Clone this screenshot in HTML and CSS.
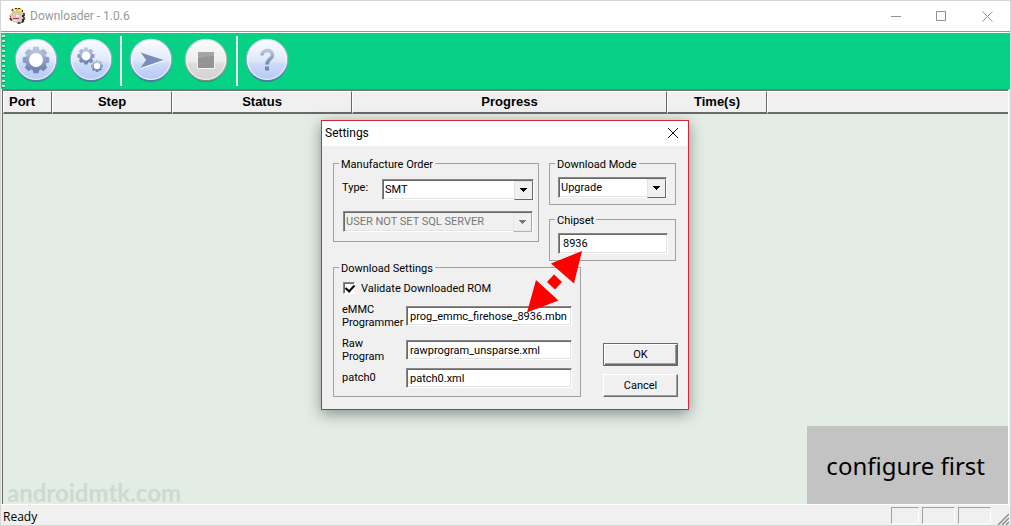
FILE: index.html
```html
<!DOCTYPE html>
<html lang="en">
<head>
<meta charset="utf-8">
<meta name="viewport" content="width=device-width, initial-scale=1">
<title>Downloader - 1.0.6</title>
<link rel="stylesheet" href="styles.css">
</head>
<body>
<svg class="defs" width="0" height="0" aria-hidden="true">
  <defs>
    <linearGradient id="blue" x1="0" y1="0" x2="0" y2="1">
      <stop offset="0" stop-color="#fdfeff"/><stop offset=".52" stop-color="#dfe7f8"/>
      <stop offset=".6" stop-color="#cddaf7"/><stop offset="1" stop-color="#b4c8f5"/>
    </linearGradient>
    <linearGradient id="grey" x1="0" y1="0" x2="0" y2="1">
      <stop offset="0" stop-color="#fdfdfd"/><stop offset=".52" stop-color="#ececec"/>
      <stop offset=".6" stop-color="#dcdcdc"/><stop offset="1" stop-color="#d2d2d2"/>
    </linearGradient>
    <linearGradient id="ink" x1="0" y1="0" x2="0" y2="1">
      <stop offset="0" stop-color="#b9c5df"/><stop offset="1" stop-color="#7285b3"/>
    </linearGradient>
    <linearGradient id="rim" x1="0" y1="0" x2="0" y2="1">
      <stop offset="0" stop-color="#d5dff2"/><stop offset="1" stop-color="#5577a8"/>
    </linearGradient>
    <linearGradient id="rim-grey" x1="0" y1="0" x2="0" y2="1">
      <stop offset="0" stop-color="#dedede"/><stop offset="1" stop-color="#868c88"/>
    </linearGradient>
    <g id="gear">
      <circle r="8.800" fill="#fff"/>
      <circle r="8.800" fill="none" stroke="url(#ink)" stroke-width="3.800"/>
      <g fill="#8b9bc4">
        <path d="M-3.500-9.500-2.600-13.300H2.600L3.500-9.500z" fill="#b7c3de"/>
        <path d="M-3.500-9.500-2.600-13.300H2.600L3.500-9.500z" transform="rotate(45)" fill="#a9b6d5"/>
        <path d="M-3.500-9.500-2.600-13.300H2.600L3.500-9.500z" transform="rotate(90)"/>
        <path d="M-3.500-9.500-2.600-13.300H2.600L3.500-9.500z" transform="rotate(135)" fill="#7588b6"/>
        <path d="M-3.500-9.500-2.600-13.300H2.600L3.500-9.500z" transform="rotate(180)" fill="#7285b3"/>
        <path d="M-3.500-9.500-2.600-13.300H2.600L3.500-9.500z" transform="rotate(225)" fill="#7588b6"/>
        <path d="M-3.500-9.500-2.600-13.300H2.600L3.500-9.500z" transform="rotate(270)"/>
        <path d="M-3.500-9.500-2.600-13.300H2.600L3.500-9.500z" transform="rotate(315)" fill="#a9b6d5"/>
      </g>
    </g>
    <g id="disc">
      <circle cx="22" cy="23.500" r="20.500" fill="#066b45" opacity=".45"/>
      <circle cx="22" cy="22" r="20.700" fill="url(#blue)" stroke="url(#rim)" stroke-width="1.200"/>
      <circle cx="22" cy="22" r="19.400" fill="none" stroke="#fff" stroke-opacity=".7"/>
    </g>
  </defs>
</svg>
<div class="window">
  <header class="titlebar">
    <svg class="app-icon" width="17" height="17" viewBox="0 0 17 17" aria-hidden="true">
      <path d="M3 5 4 1 8 0 13 1 15 5 16 9 14 14 9 15 4 14 1 11 0 7z" fill="#c9cdc9"/>
      <path d="M15 5v8l-3 2H8M1 10l2 3M3 3l1-2" fill="none" stroke="#221d16" stroke-width="1.500" stroke-dasharray="3 1"/>
      <path d="M3 5 4 1 7 1 12 0 14 4 11 6 8 4 5 5z" fill="#edc64a"/>
      <path d="M5 2h2v1H5zM10 2h2v1h-2z" fill="#fff2a0"/>
      <path d="M6 0h2v1H6zM9 0h2v1H9zM13 2h1v2h-1z" fill="#3a2b20"/>
      <path d="M4 10h6v1H4zM1 8h1v1H1z" fill="#d92d35"/>
      <path d="M13 7h2v2h-2zM13 11h2v2h-2z" fill="#3a2b20"/>
      <path d="M7 7h3v2H7zM4 12h4v1H4z" fill="#f0f0ee"/>
    </svg>
    <h1 class="title">Downloader - 1.0.6</h1>
    <div class="caption-buttons">
      <button type="button" aria-label="Minimize"><svg width="11" height="11"><path d="M1 5.500h10"/></svg></button>
      <button type="button" aria-label="Maximize"><svg width="11" height="11"><path d="M.5.500h9v9h-9z"/></svg></button>
      <button type="button" aria-label="Close"><svg width="11" height="11"><path d="m.5.500 10 10m0-10-10 10"/></svg></button>
    </div>
  </header>

  <nav class="toolbar" aria-label="Tools">
    <span class="grip"></span>
    <div class="tool-group">
      <button type="button" class="tool" aria-label="Settings">
        <svg width="44" height="46"><use href="#disc"/><use href="#gear" transform="translate(22 22)"/></svg>
      </button>
      <button type="button" class="tool" aria-label="Advanced settings">
        <svg width="44" height="46"><use href="#disc"/><use href="#gear" transform="translate(17 18) scale(.64)"/><use href="#gear" transform="translate(28 28) scale(.45)"/></svg>
      </button>
    </div>
    <div class="tool-group">
      <button type="button" class="tool" aria-label="Start">
        <svg width="44" height="46"><use href="#disc"/><path d="M11.500 15.500 34.500 23 11.500 31l5.500-8z" fill="#fff"/><path d="M11.500 14.500 34.500 22 11.500 30l5.500-8z" fill="#7a8cba"/></svg>
      </button>
      <button type="button" class="tool" aria-label="Stop">
        <svg width="44" height="46"><circle cx="22" cy="23.500" r="20.500" fill="#066b45" opacity=".45"/><circle cx="22" cy="22" r="20.700" fill="url(#grey)" stroke="url(#rim-grey)" stroke-width="1.200"/><circle cx="22" cy="22" r="19.400" fill="none" stroke="#fff" stroke-opacity=".7"/><path d="M13 13h18v18H13z" fill="#f2f2f2"/><path d="M14 14h16v16H14z" fill="#949494"/><path d="M14 14h16v4q-8 0-16 2z" fill="#a5a5a5"/></svg>
      </button>
    </div>
    <div class="tool-group">
      <button type="button" class="tool" aria-label="Help">
        <svg width="44" height="46"><use href="#disc"/><path d="M17 17.500c0-6.500 10.500-6.500 10.500-.5 0 4.500-5.500 4-5.500 9.500" fill="none" stroke="url(#ink)" stroke-width="3.600"/><path d="M20 28.500h4v4h-4z" fill="#7285b3"/></svg>
      </button>
    </div>
  </nav>

  <main class="client">
    <table class="ports">
      <colgroup><col class="c-port"><col class="c-step"><col class="c-status"><col class="c-progress"><col class="c-time"><col></colgroup>
      <thead><tr><th class="first">Port</th><th>Step</th><th>Status</th><th>Progress</th><th>Time(s)</th><td></td></tr></thead>
    </table>
    <div class="client-foot">
      <span class="watermark">androidmtk.com</span>
      <p class="note">configure first</p>
    </div>
  </main>

  <footer class="statusbar">
    <span class="status-text">Ready</span>
    <span class="pane"></span><span class="pane wide"></span><span class="pane wide"></span>
    <svg class="resize" width="12" height="13"><path d="M1 13 12 2M5 13l7-7M9 13l3-3" stroke="#8c8c8c" stroke-width="1.500"/></svg>
  </footer>

  <div class="modal-layer">
    <form class="dialog" role="dialog" aria-labelledby="dialog-title">
      <header class="dialog-bar">
        <h2 id="dialog-title">Settings</h2>
        <button type="button" class="dialog-close" aria-label="Close"><svg width="12" height="12"><path d="m1 1 10 10m0-10L1 11"/></svg></button>
      </header>
      <div class="dialog-body">
        <div class="row">
          <fieldset class="group order">
            <legend>Manufacture Order</legend>
            <div class="type-line">
              <label for="type">Type:</label>
              <div class="combo"><select id="type"><option>SMT</option></select></div>
            </div>
            <div class="combo disabled"><select aria-label="Order" disabled><option>USER NOT SET SQL SERVER</option></select></div>
          </fieldset>
          <div class="side">
            <fieldset class="group mode">
              <legend>Download Mode</legend>
              <div class="combo"><select aria-label="Download Mode"><option>Upgrade</option></select></div>
            </fieldset>
            <fieldset class="group chipset">
              <legend>Chipset</legend>
              <input class="text" type="text" aria-label="Chipset" value="8936">
            </fieldset>
          </div>
        </div>
        <div class="row">
          <fieldset class="group downloads">
            <legend>Download Settings</legend>
            <label class="check"><input type="checkbox" checked>Validate Downloaded ROM</label>
            <div class="field tall"><label for="emmc">eMMC Programmer</label><input class="text" id="emmc" type="text" value="prog_emmc_firehose_8936.mbn"></div>
            <div class="field tall"><label for="raw">Raw Program</label><input class="text" id="raw" type="text" value="rawprogram_unsparse.xml"></div>
            <div class="field"><label for="patch">patch0</label><input class="text" id="patch" type="text" value="patch0.xml"></div>
          </fieldset>
          <div class="actions">
            <button type="submit" class="push default">OK</button>
            <button type="button" class="push">Cancel</button>
          </div>
        </div>
      </div>
      <svg class="arrow" width="56" height="64" viewBox="0 0 56 64" aria-hidden="true">
        <path d="M55 1 24 13.500 47 33.500zM27 24.500l8 7.500-7 7.500-8-7.500zM0 62.500 9 30 31.500 50.500z" fill="#f00"/>
      </svg>
    </form>
  </div>
</div>
</body>
</html>
```

FILE: styles.css
```css
* { box-sizing: border-box; }
body { margin: 0; font-family: "Noto Sans", "Open Sans", sans-serif; font-size: 12px; color: #000; }
h1, h2, p { margin: 0; font-weight: 400; }
button, input, select { font: inherit; color: inherit; margin: 0; border-radius: 0; }
.defs { position: absolute; }

.window {
  position: relative;
  display: flex;
  flex-direction: column;
  min-height: 100vh;
  border: 1px solid #d6d6d6;
  background: #f0f0f0;
}

.titlebar { display: flex; align-items: center; height: 31px; padding-left: 8px; background: #fff; border-bottom: 1px solid #999; }
.app-icon { flex: none; }
.title { margin-left: 4px; font-family: Roboto, sans-serif; font-size: 12px; line-height: 16px; color: #999; }
.caption-buttons { display: flex; margin-left: auto; }
.caption-buttons button { display: grid; place-items: center; width: 46px; height: 30px; padding: 0; border: 0; background: none; }
.caption-buttons svg { fill: none; stroke: #929292; }

.toolbar { display: flex; align-items: center; height: 57px; padding-left: 1px; border-top: 1px solid #fff; background: #07d184; }
.grip { width: 4px; height: 53px; border-right: 1px solid transparent; background: repeating-linear-gradient(#baf3dc 0 2px, #079d65 2px 3px, transparent 3px 5px) padding-box; }
.tool-group { display: flex; gap: 11px; padding: 2px 7px 2px 8px; height: 50px; }
.tool-group + .tool-group { border-left: 2px solid #e8faf3; padding: 2px 8px 2px 7px; }
.tool { padding: 0; border: 0; background: none; height: 46px; }
.tool svg { display: block; }

.client {
  display: flex;
  flex: 1;
  flex-direction: column;
  margin: 0 1px;
  border: 1px solid #696969;
  border-width: 2px 1px 0;
  border-top-color: #777;
  border-right-color: #fff;
  background: #e3ede5;
}
.ports { width: 100%; table-layout: fixed; border-collapse: separate; border-spacing: 0; font: bold 13px/20px "Liberation Sans", Arial, sans-serif; }
.ports th, .ports td { height: 23px; padding: 0; background: #f0f0f0; border: 1px solid #696969; border-width: 1px 1px 2px; border-top-color: #fff; border-left-color: #fff; }
.ports td { border-right: 0; }
.ports .first { padding-left: 5px; text-align: left; }
.c-port { width: 49px; }
.c-step { width: 120px; }
.c-status { width: 180px; }
.c-progress { width: 315px; }
.c-time { width: 100px; }

.client-foot { display: flex; align-items: flex-end; justify-content: space-between; margin-top: auto; }
.watermark { padding-left: 4px; font: bold 24px/22px Lato, sans-serif; color: #ced9d1; }
.note { padding: 23px 23px 22px 19px; background: #c3c3c3; font-size: 24px; line-height: 33px; }

.statusbar { display: flex; align-items: center; height: 21px; border-top: 1px solid #fff; gap: 3px; padding-left: 2px; }
.status-text { margin-right: auto; padding-top: 2px; font-family: "Open Sans", sans-serif; }
.pane { width: 28px; height: 17px; border: 1px solid #a0a0a0; border-right-color: #fff; border-bottom-color: #fff; }
.wide { width: 33px; }
.resize { margin: 0 1px 0 3px; align-self: flex-end; }

.modal-layer { position: absolute; inset: 0; display: grid; place-items: center; padding: 3px 1px 0 0; pointer-events: none; }
.dialog {
  position: relative;
  width: 368px;
  border: 1px solid #e02038;
  background: #f0f0f0;
  box-shadow: 0 4px 14px rgba(0, 0, 0, .4);
  pointer-events: auto;
  font-family: Roboto, sans-serif;
  font-size: 11px;
  line-height: 13px;
}
.dialog-bar { display: flex; align-items: center; justify-content: space-between; height: 25px; padding: 0 9px 0 3px; background: #fff; }
.dialog-bar h2 { font: 12px/16px Roboto, sans-serif; }
.dialog-close { padding: 0; border: 0; background: none; }
.dialog-close svg { display: block; fill: none; stroke: #111; }
.dialog-body { padding: 11px 12px 12px 11px; }
.row { display: flex; gap: 10px; }

.group { min-width: 0; margin: 0; padding: 0 9px; border: 1px solid #a0a0a0; }
.group legend { margin-left: -4px; padding: 0 2px; height: 13px; line-height: 15px; white-space: nowrap; }
.order { width: 206px; height: 85px; padding: 9px 4px 0 8px; }
.order legend { margin-left: -3px; }
.type-line { display: flex; margin: 0 0 11px; }
.type-line label { width: 40px; line-height: 17px; }
.type-line .combo { flex: 1; }
.order .disabled { margin: 0 1px; }
.side { flex: 1; display: grid; gap: 8px; align-content: start; }
.mode, .chipset { height: 48px; padding: 7px 8px 0; }
.chipset { padding-right: 7px; }
.mode legend, .chipset legend { margin-left: -3px; }
.downloads { width: 248px; height: 136px; padding: 8px 8px 0; }
.downloads legend { margin-left: -3px; }

.combo { position: relative; height: 21px; }
.combo select, .text {
  display: block;
  width: 100%;
  height: 21px;
  padding: 1px 2px 0;
  appearance: none;
  border: 1px solid #888;
  border-right-color: #fff;
  border-bottom-color: #fff;
  background: #fff;
  box-shadow: inset 1px 1px #696969, inset -1px -1px #e3e3e3;
  outline: 0;
}
.combo::after {
  content: "";
  position: absolute;
  top: 2px;
  right: 1px;
  width: 17px;
  height: 17px;
  border: 1px solid #e3e3e3;
  border-right-color: #696969;
  border-bottom-color: #696969;
  background: linear-gradient(#000 0 0) 5px 6px / 7px 1px no-repeat, linear-gradient(#000 0 0) 6px 7px / 5px 1px no-repeat, linear-gradient(#000 0 0) 7px 8px / 3px 1px no-repeat, linear-gradient(#000 0 0) 8px 9px / 1px 1px no-repeat, #f0f0f0;
  pointer-events: none;
}
.disabled select { background: #f0f0f0; color: #777; opacity: 1; }
.disabled::after { opacity: .5; }
.chipset .text { padding-left: 4px; }

.check { display: flex; align-items: center; gap: 6px; height: 13px; margin: 0 0 4px 1px; line-height: 15px; }
.check input {
  width: 12px;
  height: 12px;
  appearance: none;
  border: 1px solid #888;
  border-right-color: #fff;
  border-bottom-color: #fff;
  background: #fff;
  box-shadow: inset 1px 1px #696969;
}
.check input:checked::before {
  content: "";
  display: block;
  width: 4px;
  height: 7px;
  margin: 0 0 0 3px;
  border: solid #000;
  border-width: 0 2px 2px 0;
  transform: rotate(42deg);
}
.field { display: grid; grid-template-columns: 64px 1fr; align-items: center; min-height: 22px; }
.tall { min-height: 34px; }
.field label { width: 40px; }
.field .text { height: 20px; padding-left: 3px; }

.actions { flex: 1; display: flex; flex-direction: column; gap: 8px; align-items: flex-end; justify-content: flex-end; margin-right: -2px; }
.push { width: 75px; height: 23px; padding: 1px 0 0; border: 1px solid #fff; border-right-color: #696969; border-bottom-color: #696969; background: #f0f0f0; box-shadow: inset -1px -1px #a0a0a0; }
.default { border-color: #696969; box-shadow: inset 1px 1px #fff, inset -1px -1px #696969, inset -2px -2px #a0a0a0; }
.arrow { position: absolute; left: 205px; top: 129px; }
```
